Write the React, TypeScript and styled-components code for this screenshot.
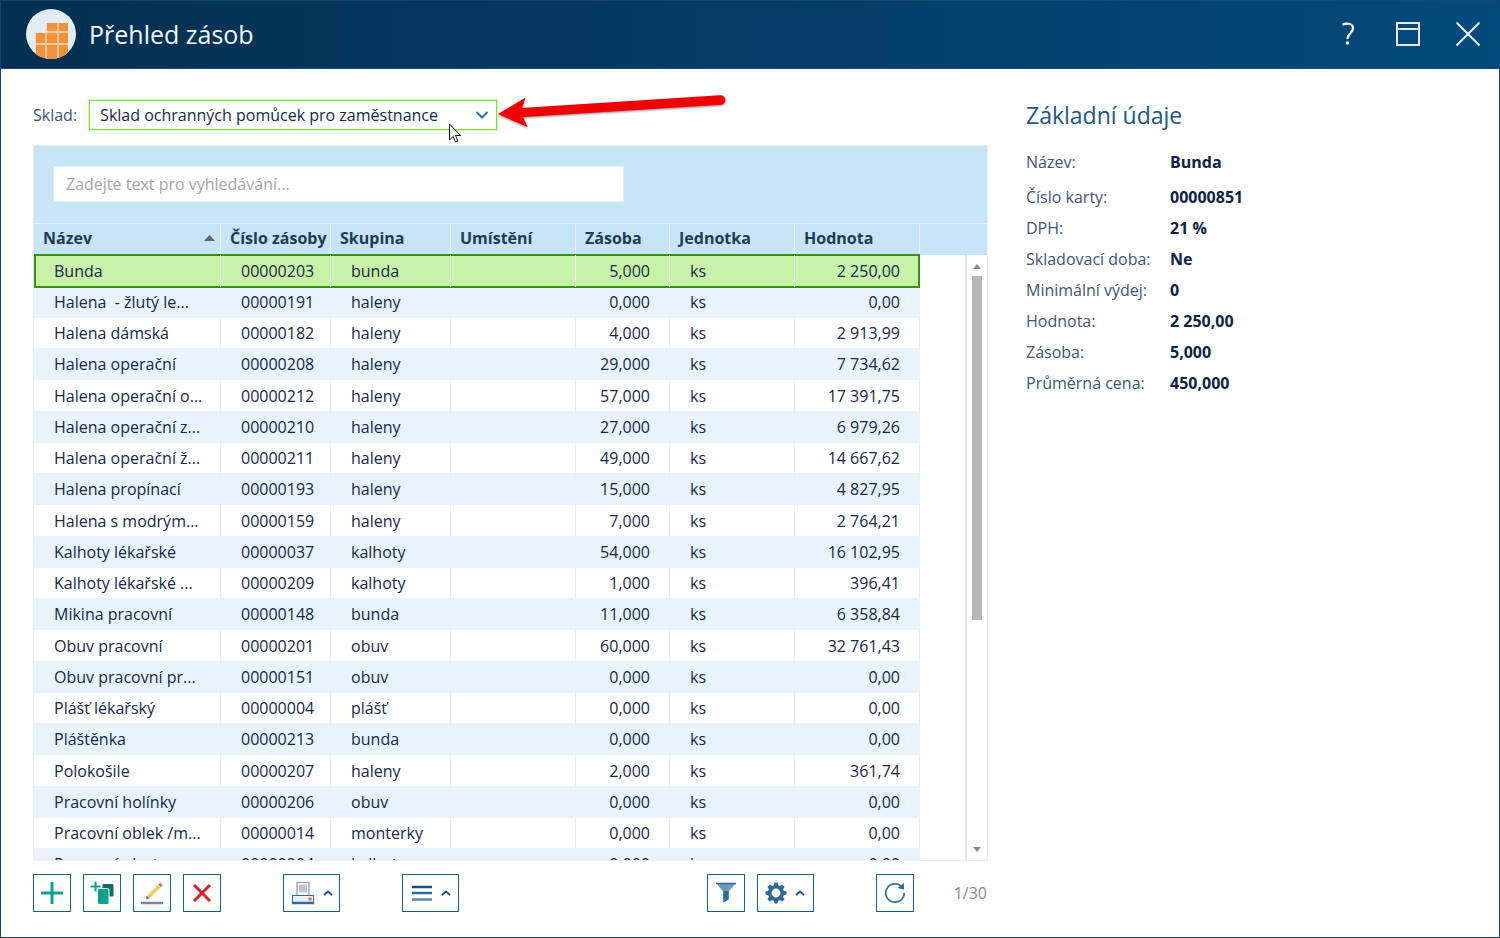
import React from "react";
import styled, { createGlobalStyle, css } from "styled-components";

const GlobalStyle = createGlobalStyle`
  *, *::before, *::after { box-sizing: border-box; }
  body {
    margin: 0;
    font-family: "Open Sans", "Noto Sans", sans-serif;
    font-size: 16px;
    color: #14284a;
    background: #fff;
  }
  button, input, select { font: inherit; color: inherit; }
`;

const line = "#e9f0fb";
const lightBlue = "#c6e5f6";
const blue = "#1b5e90";
const green = "#3c8f14";

const Window = styled.div`
  display: flex;
  flex-direction: column;
  height: 100vh;
  min-height: 480px;
  border: 1px solid #11456d;
  border-top: 0;
`;

const TitleBar = styled.header`
  display: flex;
  align-items: center;
  flex: none;
  height: 69px;
  padding: 0 17px 2px 25px;
  background: linear-gradient(90deg, #032f50, #034a7c);
  border-top: 1px solid #16486e;
  border-bottom: 1px solid #16486e;
  color: #f2f7fb;
`;

const Title = styled.h1`
  flex: 1;
  margin: 0 0 0 13px;
  font-size: 25px;
  line-height: 32px;
  font-weight: 400;
`;

const WindowButtons = styled.div`
  display: flex;
  gap: 32px;
`;

const PlainButton = styled.button`
  display: grid;
  place-items: center;
  width: 28px;
  height: 32px;
  padding: 0;
  border: 0;
  background: none;
`;

const Content = styled.main`
  display: grid;
  flex: 1;
  min-height: 0;
  grid-template-columns: minmax(0, 955fr) minmax(0, 442fr);
  gap: 38px;
  padding: 31px 31px 25px 32px;
`;

const StockColumn = styled.section`
  display: flex;
  flex-direction: column;
  min-height: 0;
`;

const WarehouseRow = styled.div`
  position: relative;
  display: flex;
  align-items: center;
  gap: 12px;
  height: 30px;
  margin-bottom: 15px;
  color: #3d5675;
`;

const SelectBox = styled.div`
  position: relative;
  width: 408px;
`;

const Select = styled.select`
  appearance: none;
  display: block;
  width: 100%;
  height: 30px;
  padding: 0 32px 0 10px;
  border: 1px solid #7be535;
  border-radius: 0;
  outline: 0;
  box-shadow: 0 0 0 1px #d4f9b9;
  background: #fff;
  color: #14284a;
`;

const SelectChevron = styled.svg`
  position: absolute;
  top: 10px;
  right: 8px;
  pointer-events: none;
`;

const Pointer = styled.svg`
  position: absolute;
  left: 415px;
  top: 23px;
  z-index: 2;
`;

const Arrow = styled.svg`
  position: absolute;
  left: 455px;
  top: -12px;
  z-index: 2;
  filter: drop-shadow(0 1px 1px rgba(0, 0, 0, 0.5));
`;

const Panel = styled.div`
  display: flex;
  flex-direction: column;
  flex: 1;
  min-height: 0;
  border: 1px solid ${line};
`;

const SearchArea = styled.div`
  flex: none;
  padding: 20px 19px 21px;
  background: ${lightBlue};
  border-bottom: 1px solid ${line};
`;

const SearchInput = styled.input`
  display: block;
  width: 571px;
  max-width: 100%;
  height: 36px;
  padding: 0 12px;
  border: 1px solid ${line};
  outline: 0;
  background: #fff;
  &::placeholder { color: #a5a5a5; opacity: 1; }
`;

const GridArea = styled.div`
  display: flex;
  flex: 1;
  min-height: 0;
`;

const TableClip = styled.div`
  flex: 1;
  min-width: 0;
  overflow: hidden;
`;

const Table = styled.table`
  width: 100%;
  table-layout: fixed;
  border-collapse: separate;
  border-spacing: 0;
`;

const HeadCell = styled.th`
  height: 31px;
  padding: 0 0 3px 9px;
  background: ${lightBlue};
  border-right: 1px solid ${line};
  color: #1f3a5c;
  font-weight: 700;
  text-align: left;
  white-space: nowrap;
  &:last-child { border-right: 0; }
`;

const HeadLabel = styled.div`
  display: flex;
  align-items: center;
  justify-content: space-between;
  padding-right: 5px;
`;

const Cell = styled.td<{ $right?: boolean }>`
  padding: 0 19px 0 20px;
  border-right: 1px solid ${line};
  border-bottom: 1px solid ${line};
  line-height: 22px;
  white-space: pre;
  text-align: ${(p) => (p.$right ? "right" : "left")};
`;

const Filler = styled.td`
  padding: 0;
  background: #fff;
`;

const selectedRow = css`
  ${Cell} {
    position: relative;
    background: #c8f2a8;
    border-bottom: 0;
    box-shadow: inset 0 1px ${green}, 0 -1px ${green}, inset 0 -1px ${green}, 0 1px ${green};
  }
  ${Cell}:first-child { border-left: 2px solid ${green}; padding-left: 18px; }
  ${Cell}:nth-child(7) { border-right: 2px solid ${green}; padding-right: 18px; }
`;

const Row = styled.tr<{ $selected: boolean }>`
  height: 31px;
  &:nth-child(4n + 1) { height: 32px; }
  &:nth-child(even) ${Cell} { background: #e7f4fc; }
  ${(p) => p.$selected && selectedRow}
`;

const ScrollColumn = styled.div`
  display: flex;
  flex-direction: column;
  flex: none;
  width: 22px;
`;

const ScrollHead = styled.div`
  height: 31px;
  margin-left: -1px;
  background: ${lightBlue};
`;

const ScrollTrack = styled.div`
  display: flex;
  flex: 1;
  flex-direction: column;
  align-items: center;
  justify-content: space-between;
  padding: 9px 0 8px;
  border-left: 2px solid #e6e6e6;
`;

const ScrollRail = styled.div`
  flex: 1;
  margin: 7px 0;
  width: 10px;
`;

const ScrollThumb = styled.div`
  height: 61%;
  background: #b7b7b7;
`;

const Toolbar = styled.div`
  display: flex;
  align-items: center;
  flex: none;
  margin-top: 13px;
`;

const Group = styled.div<{ $before?: number; $push?: boolean }>`
  display: flex;
  gap: 12px;
  margin-left: ${(p) => (p.$push ? "auto" : `${p.$before ?? 0}px`)};
`;

const ToolButton = styled.button<{ $menu?: boolean }>`
  display: flex;
  align-items: center;
  justify-content: center;
  gap: 8px;
  width: ${(p) => (p.$menu ? 57 : 38)}px;
  height: 38px;
  padding: 0;
  border: 1px solid ${blue};
  background: #fff;
`;

const Counter = styled.span`
  margin-left: 40px;
  padding-right: 1px;
  color: #8c8c8c;
`;

const Details = styled.aside`
  min-width: 0;
`;

const DetailsTitle = styled.h2`
  margin: 0 0 21px;
  font-size: 23px;
  line-height: 30px;
  font-weight: 400;
  color: #1c5687;
`;

const Facts = styled.dl`
  display: grid;
  grid-template-columns: 144px 1fr;
  row-gap: 9px;
  margin: 0;
  line-height: 22px;
  dt { color: #3d5675; white-space: nowrap; }
  dd { margin: 0; font-weight: 700; color: #0d2244; }
  dt:first-of-type { padding-bottom: 4px; }
`;

const Logo = () => (
  <svg width="50" height="50" viewBox="0 0 50 50" aria-hidden="true">
    <defs>
      <clipPath id="disc"><circle cx="25" cy="25" r="25" /></clipPath>
    </defs>
    <circle cx="25" cy="25" r="25" fill="#e2edf6" />
    <g clipPath="url(#disc)">
      <path d="M20.500 14H41.500V50H9.500V24H20.500Z" fill="#f8c89c" />
      <path
        d="M21 14h10v8H21zM33 14h9v8h-9zM10 24h9v10h-9zM21 24h10v10H21zM33 24h9v10h-9zM10 36h9v14h-9zM21 36h10v14H21zM33 36h9v14h-9z"
        fill="#f3923a"
      />
    </g>
  </svg>
);

const Caret = () => (
  <svg width="10" height="6" viewBox="0 0 10 6" aria-hidden="true">
    <path d="M1 5 5 1.500 9 5" fill="none" stroke="#1b5580" strokeWidth="2" />
  </svg>
);

const PlusIcon = () => (
  <svg width="22" height="22" viewBox="0 0 22 22" aria-hidden="true">
    <path d="M11 1V21M1 11H21" stroke="#0ca38c" strokeWidth="3" strokeLinecap="round" />
  </svg>
);

const CopyIcon = () => (
  <svg width="24" height="24" viewBox="0 0 24 24" aria-hidden="true">
    <path d="M5.500 .500v10M.500 5.500h10" stroke="#0ca38c" strokeWidth="2" />
    <rect x="12.500" y="3" width="11" height="12.500" rx="1" fill="#04705f" />
    <rect x="7.500" y="7.500" width="11.500" height="16" rx="1.500" fill="#0ca38c" stroke="#fff" />
  </svg>
);

const PencilIcon = () => (
  <svg width="24" height="24" viewBox="0 0 24 24" aria-hidden="true">
    <path d="M1 22H23" stroke="#8d7f99" strokeWidth="2.500" />
    <path d="M8 16.500 19 5.500" stroke="#fbc35a" strokeWidth="3.500" />
    <path d="M19.500 5 21.500 3" stroke="#ef6b61" strokeWidth="3.500" />
    <path d="M6 18.500 6.500 14.500 9.500 17.500Z" fill="#7d7189" />
  </svg>
);

const CrossIcon = () => (
  <svg width="20" height="20" viewBox="0 0 20 20" aria-hidden="true">
    <path d="M2 2 18 18M18 2 2 18" stroke="#d4202c" strokeWidth="3" />
  </svg>
);

const PrinterIcon = () => (
  <svg width="24" height="24" viewBox="0 0 24 24" aria-hidden="true">
    <path d="M6 14V1.500H18V14" fill="#fff" stroke="#9c90a6" strokeWidth="1.200" />
    <rect x="8" y="3.500" width="8" height="8" fill="#c9c2cf" />
    <rect x="1.500" y="14.500" width="21" height="8" fill="#e6f4fb" stroke="#2d6d9b" />
    <path d="M1 22H23" stroke="#2d6d9b" strokeWidth="2.500" />
    <circle cx="19" cy="18" r="1.800" fill="#f0605c" />
  </svg>
);

const MenuIcon = () => (
  <svg width="22" height="18" viewBox="0 0 22 18" aria-hidden="true">
    <path d="M1 3H21" stroke="#12517f" strokeWidth="2.500" />
    <path d="M1 9H21" stroke="#2e6b97" strokeWidth="2.500" />
    <path d="M1 15.500H21" stroke="#5088ae" strokeWidth="2.500" />
  </svg>
);

const FunnelIcon = () => (
  <svg width="22" height="22" viewBox="0 0 22 22" aria-hidden="true">
    <path d="M1 1H21L13.800 9.500H8.200Z" fill="#6f9bbb" />
    <path d="M8.200 9H13.800V17.500L8.200 20.500Z" fill="#2f6b97" />
    <path d="M1 1.500H21" stroke="#2f6b97" strokeWidth="1.500" />
  </svg>
);

const GearIcon = () => (
  <svg width="22" height="22" viewBox="-11 -11 22 22" aria-hidden="true">
    <circle r="6.200" fill="none" stroke="#2f6b97" strokeWidth="3.600" />
    {[0, 45, 90, 135, 180, 225, 270, 315].map((a) => (
      <path key={a} d="M-2.500 -7 -1.600 -10.500H1.600L2.500 -7Z" fill="#2f6b97" transform={`rotate(${a})`} />
    ))}
  </svg>
);

const RefreshIcon = () => (
  <svg width="22" height="22" viewBox="0 0 22 22" aria-hidden="true">
    <path d="M17.500 4.500A9.200 9.200 0 1 0 20.200 11" fill="none" stroke="#3b759f" strokeWidth="1.800" />
    <path d="M20 1V7.500L13.500 6Z" fill="#2f6b97" />
  </svg>
);

type Item = [string, string, string, string, string];

const items: Item[] = [
  ["Bunda", "00000203", "bunda", "5,000", "2 250,00"],
  ["Halena  - žlutý le...", "00000191", "haleny", "0,000", "0,00"],
  ["Halena dámská", "00000182", "haleny", "4,000", "2 913,99"],
  ["Halena operační", "00000208", "haleny", "29,000", "7 734,62"],
  ["Halena operační o...", "00000212", "haleny", "57,000", "17 391,75"],
  ["Halena operační z...", "00000210", "haleny", "27,000", "6 979,26"],
  ["Halena operační ž...", "00000211", "haleny", "49,000", "14 667,62"],
  ["Halena propínací", "00000193", "haleny", "15,000", "4 827,95"],
  ["Halena s modrým...", "00000159", "haleny", "7,000", "2 764,21"],
  ["Kalhoty lékařské", "00000037", "kalhoty", "54,000", "16 102,95"],
  ["Kalhoty lékařské ...", "00000209", "kalhoty", "1,000", "396,41"],
  ["Mikina pracovní", "00000148", "bunda", "11,000", "6 358,84"],
  ["Obuv pracovní", "00000201", "obuv", "60,000", "32 761,43"],
  ["Obuv pracovní pr...", "00000151", "obuv", "0,000", "0,00"],
  ["Plášť lékařský", "00000004", "plášť", "0,000", "0,00"],
  ["Pláštěnka", "00000213", "bunda", "0,000", "0,00"],
  ["Polokošile", "00000207", "haleny", "2,000", "361,74"],
  ["Pracovní holínky", "00000206", "obuv", "0,000", "0,00"],
  ["Pracovní oblek /m...", "00000014", "monterky", "0,000", "0,00"],
  ["Pracovní plast...", "00000204", "kalhoty", "0,000", "0,00"],
];

const columns = [
  { label: "Název", width: 187 },
  { label: "Číslo zásoby", width: 110 },
  { label: "Skupina", width: 120 },
  { label: "Umístění", width: 125 },
  { label: "Zásoba", width: 94 },
  { label: "Jednotka", width: 125 },
  { label: "Hodnota", width: 125 },
];

const facts = [
  ["Název:", "Bunda"],
  ["Číslo karty:", "00000851"],
  ["DPH:", "21 %"],
  ["Skladovací doba:", "Ne"],
  ["Minimální výdej:", "0"],
  ["Hodnota:", "2 250,00"],
  ["Zásoba:", "5,000"],
  ["Průměrná cena:", "450,000"],
];

export default function App() {
  return (
    <>
      <GlobalStyle />
      <Window>
        <TitleBar>
          <Logo />
          <Title>Přehled zásob</Title>
          <WindowButtons>
            <PlainButton aria-label="Nápověda">
              <svg width="14" height="24" viewBox="0 0 14 24">
                <path d="M1.500 2.800C5 .800 12 .800 12 6.300 12 11 6.500 11 6.500 17" fill="none" stroke="#fff" strokeWidth="2.200" />
                <circle cx="6.500" cy="21" r="1.800" fill="#fff" />
              </svg>
            </PlainButton>
            <PlainButton aria-label="Maximalizovat">
              <svg width="24" height="24" viewBox="0 0 24 24" fill="none" stroke="#e2ebf3" strokeWidth="2">
                <path d="M1 1H23V23H1ZM1 7H23" />
              </svg>
            </PlainButton>
            <PlainButton aria-label="Zavřít">
              <svg width="24" height="24" viewBox="0 0 24 24" fill="none" stroke="#e8f0f6" strokeWidth="2">
                <path d="M.500 .500 23.500 23.500M23.500 .500 .500 23.500" />
              </svg>
            </PlainButton>
          </WindowButtons>
        </TitleBar>
        <Content>
          <StockColumn>
            <WarehouseRow>
              <label htmlFor="warehouse">Sklad:</label>
              <SelectBox>
                <Select id="warehouse">
                  <option>Sklad ochranných pomůcek pro zaměstnance</option>
                </Select>
                <SelectChevron width="14" height="10" viewBox="0 0 14 10">
                  <path d="M1.500 2 7 7.500 12.500 2" fill="none" stroke="#3b6f9b" strokeWidth="2" />
                </SelectChevron>
              </SelectBox>
              <Arrow width="240" height="60" viewBox="488 88 240 60">
                <path
                  d="M498 114 525.500 97.500 522 108 720 95.200A4.800 4.800 0 0 1 721 104.800L523 117 527.500 127Z"
                  fill="#f00000"
                />
              </Arrow>
              <Pointer width="14" height="20" viewBox="0 0 14 20">
                <path d="M1.500 1V17L5 13.500 7.500 19 10 18 7.500 12.500H12.500Z" fill="#fff" stroke="#111" />
              </Pointer>
            </WarehouseRow>
            <Panel>
              <SearchArea>
                <SearchInput aria-label="Vyhledávání" placeholder="Zadejte text pro vyhledávání..." />
              </SearchArea>
              <GridArea>
                <TableClip>
                  <Table>
                    <colgroup>
                      {columns.map((c) => <col key={c.label} width={c.width} />)}
                      <col />
                    </colgroup>
                    <thead>
                      <tr>
                        {columns.map((c, i) => (
                          <HeadCell key={c.label} scope="col">
                            {i === 0 ? (
                              <HeadLabel>
                                {c.label}
                                <svg width="11" height="6" viewBox="0 0 11 6" aria-hidden="true">
                                  <path d="M0 6 5.500 0 11 6Z" fill="#666" />
                                </svg>
                              </HeadLabel>
                            ) : c.label}
                          </HeadCell>
                        ))}
                        <HeadCell aria-hidden="true" />
                      </tr>
                    </thead>
                    <tbody>
                      {items.map(([name, no, group, stock, value], i) => (
                        <Row key={no} $selected={i === 0}>
                          <Cell>{name}</Cell>
                          <Cell>{no}</Cell>
                          <Cell>{group}</Cell>
                          <Cell />
                          <Cell $right>{stock}</Cell>
                          <Cell>ks</Cell>
                          <Cell $right>{value}</Cell>
                          <Filler />
                        </Row>
                      ))}
                    </tbody>
                  </Table>
                </TableClip>
                <ScrollColumn aria-hidden="true">
                  <ScrollHead />
                  <ScrollTrack>
                    <svg width="8" height="5" viewBox="0 0 8 5"><path d="M0 5 4 0 8 5Z" fill="#8c8c8c" /></svg>
                    <ScrollRail><ScrollThumb /></ScrollRail>
                    <svg width="8" height="5" viewBox="0 0 8 5"><path d="M0 0 4 5 8 0Z" fill="#8c8c8c" /></svg>
                  </ScrollTrack>
                </ScrollColumn>
              </GridArea>
            </Panel>
            <Toolbar>
              <Group>
                <ToolButton aria-label="Přidat"><PlusIcon /></ToolButton>
                <ToolButton aria-label="Kopírovat"><CopyIcon /></ToolButton>
                <ToolButton aria-label="Upravit"><PencilIcon /></ToolButton>
                <ToolButton aria-label="Smazat"><CrossIcon /></ToolButton>
              </Group>
              <Group $before={62}>
                <ToolButton $menu aria-label="Tisk"><PrinterIcon /><Caret /></ToolButton>
              </Group>
              <Group $before={62}>
                <ToolButton $menu aria-label="Nabídka"><MenuIcon /><Caret /></ToolButton>
              </Group>
              <Group $push>
                <ToolButton aria-label="Filtr"><FunnelIcon /></ToolButton>
                <ToolButton $menu aria-label="Nastavení"><GearIcon /><Caret /></ToolButton>
              </Group>
              <Group $before={62}>
                <ToolButton aria-label="Obnovit"><RefreshIcon /></ToolButton>
              </Group>
              <Counter>1/30</Counter>
            </Toolbar>
          </StockColumn>
          <Details>
            <DetailsTitle>Základní údaje</DetailsTitle>
            <Facts>
              {facts.map(([label, value]) => (
                <React.Fragment key={label}>
                  <dt>{label}</dt>
                  <dd>{value}</dd>
                </React.Fragment>
              ))}
            </Facts>
          </Details>
        </Content>
      </Window>
    </>
  );
}
